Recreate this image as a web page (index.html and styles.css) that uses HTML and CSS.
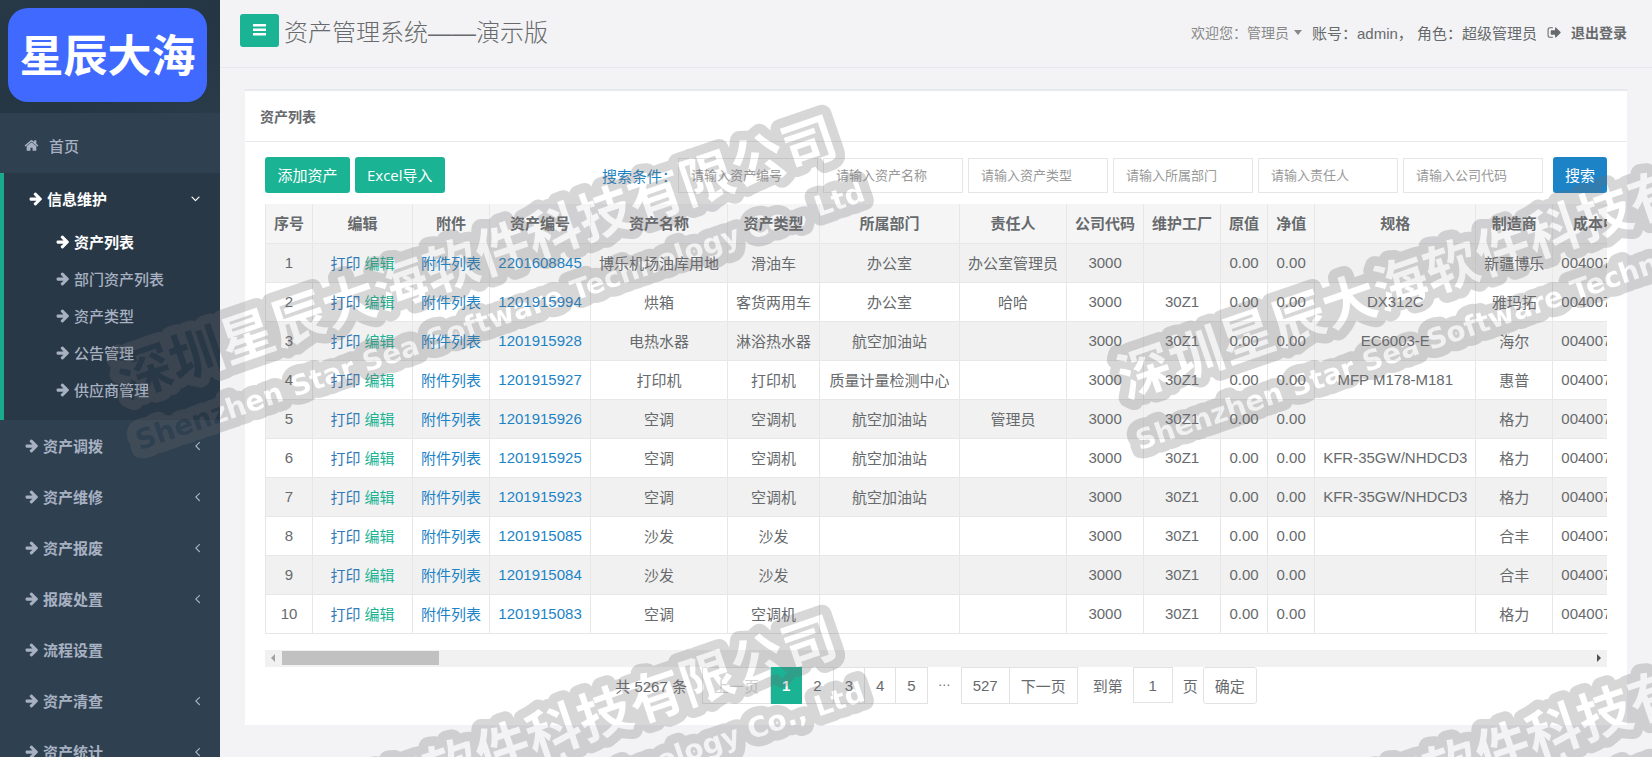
FILE: index.html
```html
<!DOCTYPE html>
<html lang="zh-CN">
<head>
    <meta charset="UTF-8">
    <meta name="viewport" content="width=device-width, initial-scale=1.0">
    <title>资产管理系统</title>
    <link rel="stylesheet" href="styles.css">
</head>
<body>
    <!-- 图标 -->
    <svg class="icon-defs" aria-hidden="true">
        <symbol id="i-arrow" viewBox="0 0 1792 1792"><path d="M1664 960q0 53-37 91l-651 651q-39 37-91 37-51 0-90-37l-75-75q-38-38-38-91t38-91l293-293h-704q-52 0-84.500-37.500t-32.500-90.500v-128q0-53 32.500-90.500t84.500-37.500h704l-293-294q-38-36-38-90t38-90l75-75q38-38 90-38 53 0 91 38l651 651q37 35 37 90z"/></symbol>
        <symbol id="i-left" viewBox="0 0 1792 1792"><path d="M1203 544q0 13-10 23l-393 393 393 393q10 10 10 23t-10 23l-50 50q-10 10-23 10t-23-10l-466-466q-10-10-10-23t10-23l466-466q10-10 23-10t23 10l50 50q10 10 10 23z"/></symbol>
        <symbol id="i-down" viewBox="0 0 1792 1792"><path d="M1395 736q0 13-10 23l-466 466q-10 10-23 10t-23-10l-466-466q-10-10-10-23t10-23l50-50q10-10 23-10t23 10l393 393 393-393q10-10 23-10t23 10l50 50q10 10 10 23z"/></symbol>
        <symbol id="i-home" viewBox="0 0 1792 1792"><path d="M1472 992v480q0 26-19 45t-45 19h-384v-384h-256v384h-384q-26 0-45-19t-19-45v-480q0-1 .5-3t.5-3l575-474 575 474q1 2 1 6zm223-69l-62 74q-8 9-21 11h-3q-13 0-21-7l-692-577-692 577q-12 8-24 7-13-2-21-11l-62-74q-8-10-7-23.500t11-21.500l719-599q32-26 76-26t76 26l244 204v-195q0-14 9-23t23-9h192q14 0 23 9t9 23v408l219 182q10 8 11 21.500t-7 23.500z"/></symbol>
        <symbol id="i-out" viewBox="0 0 1792 1792"><path d="M704 1440q0 4 1 20t.5 26.500-3 23.500-10 19.500-20.500 6.500h-320q-119 0-203.500-84.500t-84.500-203.500v-704q0-119 84.500-203.500t203.500-84.500h320q13 0 22.500 9.500t9.500 22.500q0 4 1 20t.5 26.500-3 23.500-10 19.500-20.500 6.500h-320q-66 0-113 47t-47 113v704q0 66 47 113t113 47h312l11.500 1 11.500 3 8 5.500 7 9 2 13.500zm928-544q0 26-19 45l-544 544q-19 19-45 19t-45-19-19-45v-288h-448q-26 0-45-19t-19-45v-384q0-26 19-45t45-19h448v-288q0-26 19-45t45-19 45 19l544 544q19 19 19 45z"/></symbol>
    </svg>

    <div class="wrapper">
        <nav class="sidebar">
            <div class="logo-box"><div class="logo">星辰大海</div></div>
            <ul class="menu">
                <li class="home"><a href="#"><svg class="icon"><use href="#i-home"/></svg><span>首页</span></a></li>
                <li class="open">
                    <a href="#"><svg class="icon"><use href="#i-arrow"/></svg><span>信息维护</span><svg class="icon chev"><use href="#i-down"/></svg></a>
                    <ul class="submenu">
                        <li class="current"><a href="#"><svg class="icon"><use href="#i-arrow"/></svg><span>资产列表</span></a></li>
                        <li><a href="#"><svg class="icon"><use href="#i-arrow"/></svg><span>部门资产列表</span></a></li>
                        <li><a href="#"><svg class="icon"><use href="#i-arrow"/></svg><span>资产类型</span></a></li>
                        <li><a href="#"><svg class="icon"><use href="#i-arrow"/></svg><span>公告管理</span></a></li>
                        <li><a href="#"><svg class="icon"><use href="#i-arrow"/></svg><span>供应商管理</span></a></li>
                    </ul>
                </li>
                <li><a href="#"><svg class="icon"><use href="#i-arrow"/></svg><span>资产调拨</span><svg class="icon chev"><use href="#i-left"/></svg></a></li>
                <li><a href="#"><svg class="icon"><use href="#i-arrow"/></svg><span>资产维修</span><svg class="icon chev"><use href="#i-left"/></svg></a></li>
                <li><a href="#"><svg class="icon"><use href="#i-arrow"/></svg><span>资产报废</span><svg class="icon chev"><use href="#i-left"/></svg></a></li>
                <li><a href="#"><svg class="icon"><use href="#i-arrow"/></svg><span>报废处置</span><svg class="icon chev"><use href="#i-left"/></svg></a></li>
                <li><a href="#"><svg class="icon"><use href="#i-arrow"/></svg><span>流程设置</span></a></li>
                <li><a href="#"><svg class="icon"><use href="#i-arrow"/></svg><span>资产清查</span><svg class="icon chev"><use href="#i-left"/></svg></a></li>
                <li><a href="#"><svg class="icon"><use href="#i-arrow"/></svg><span>资产统计</span><svg class="icon chev"><use href="#i-left"/></svg></a></li>
            </ul>
        </nav>

        <main class="page">
            <header class="topbar">
                <button class="toggle-btn" type="button" aria-label="菜单">
                    <svg width="13" height="13" viewBox="0 0 13 13" fill="#fff"><path d="M0 1h13v2.600H0zM0 5.500h13v2.600H0zM0 10h13v2.600H0z"/></svg>
                </button>
                <h1>资产管理系统——演示版</h1>
                <div class="user">
                    <a class="welcome" href="#">欢迎您：管理员<i class="caret"></i></a>
                    <span class="account">账号：admin， 角色：超级管理员</span>
                    <a class="logout" href="#"><svg class="icon"><use href="#i-out"/></svg>退出登录</a>
                </div>
            </header>

            <section class="panel">
                <h2>资产列表</h2>
                <div class="panel-body">
                    <div class="toolbar">
                        <button class="btn btn-primary" type="button">添加资产</button>
                        <button class="btn btn-primary" type="button">Excel导入</button>
                        <form class="search">
                            <label for="assetNo">搜索条件：</label>
                            <input type="text" id="assetNo" placeholder="请输入资产编号">
                            <input type="text" aria-label="资产名称" placeholder="请输入资产名称">
                            <input type="text" aria-label="资产类型" placeholder="请输入资产类型">
                            <input type="text" aria-label="所属部门" placeholder="请输入所属部门">
                            <input type="text" aria-label="责任人" placeholder="请输入责任人">
                            <input type="text" aria-label="公司代码" placeholder="请输入公司代码">
                            <button class="btn btn-search" type="button">搜索</button>
                        </form>
                    </div>

                    <div class="table-wrap">
                        <table>
                            <thead>
                                <tr><th>序号</th><th class="col-edit">编辑</th><th>附件</th><th class="col-no">资产编号</th><th>资产名称</th><th>资产类型</th><th class="col-dept">所属部门</th><th>责任人</th><th>公司代码</th><th>维护工厂</th><th>原值</th><th>净值</th><th>规格</th><th>制造商</th><th>成本中心</th></tr>
                            </thead>
                            <tbody>
                                <tr><td>1</td><td><a class="print" href="#">打印</a> <a class="edit" href="#">编辑</a></td><td><a href="#">附件列表</a></td><td><a href="#">2201608845</a></td><td>博乐机场油库用地</td><td>滑油车</td><td>办公室</td><td>办公室管理员</td><td>3000</td><td></td><td>0.00</td><td>0.00</td><td></td><td>新疆博乐</td><td>0040070000</td></tr>
                                <tr><td>2</td><td><a class="print" href="#">打印</a> <a class="edit" href="#">编辑</a></td><td><a href="#">附件列表</a></td><td><a href="#">1201915994</a></td><td>烘箱</td><td>客货两用车</td><td>办公室</td><td>哈哈</td><td>3000</td><td>30Z1</td><td>0.00</td><td>0.00</td><td>DX312C</td><td>雅玛拓</td><td>0040070000</td></tr>
                                <tr><td>3</td><td><a class="print" href="#">打印</a> <a class="edit" href="#">编辑</a></td><td><a href="#">附件列表</a></td><td><a href="#">1201915928</a></td><td>电热水器</td><td>淋浴热水器</td><td>航空加油站</td><td></td><td>3000</td><td>30Z1</td><td>0.00</td><td>0.00</td><td>EC6003-E</td><td>海尔</td><td>0040070000</td></tr>
                                <tr><td>4</td><td><a class="print" href="#">打印</a> <a class="edit" href="#">编辑</a></td><td><a href="#">附件列表</a></td><td><a href="#">1201915927</a></td><td>打印机</td><td>打印机</td><td>质量计量检测中心</td><td></td><td>3000</td><td>30Z1</td><td>0.00</td><td>0.00</td><td>MFP M178-M181</td><td>惠普</td><td>0040070000</td></tr>
                                <tr><td>5</td><td><a class="print" href="#">打印</a> <a class="edit" href="#">编辑</a></td><td><a href="#">附件列表</a></td><td><a href="#">1201915926</a></td><td>空调</td><td>空调机</td><td>航空加油站</td><td>管理员</td><td>3000</td><td>30Z1</td><td>0.00</td><td>0.00</td><td></td><td>格力</td><td>0040070000</td></tr>
                                <tr><td>6</td><td><a class="print" href="#">打印</a> <a class="edit" href="#">编辑</a></td><td><a href="#">附件列表</a></td><td><a href="#">1201915925</a></td><td>空调</td><td>空调机</td><td>航空加油站</td><td></td><td>3000</td><td>30Z1</td><td>0.00</td><td>0.00</td><td>KFR-35GW/NHDCD3</td><td>格力</td><td>0040070000</td></tr>
                                <tr><td>7</td><td><a class="print" href="#">打印</a> <a class="edit" href="#">编辑</a></td><td><a href="#">附件列表</a></td><td><a href="#">1201915923</a></td><td>空调</td><td>空调机</td><td>航空加油站</td><td></td><td>3000</td><td>30Z1</td><td>0.00</td><td>0.00</td><td>KFR-35GW/NHDCD3</td><td>格力</td><td>0040070000</td></tr>
                                <tr><td>8</td><td><a class="print" href="#">打印</a> <a class="edit" href="#">编辑</a></td><td><a href="#">附件列表</a></td><td><a href="#">1201915085</a></td><td>沙发</td><td>沙发</td><td></td><td></td><td>3000</td><td>30Z1</td><td>0.00</td><td>0.00</td><td></td><td>合丰</td><td>0040070000</td></tr>
                                <tr><td>9</td><td><a class="print" href="#">打印</a> <a class="edit" href="#">编辑</a></td><td><a href="#">附件列表</a></td><td><a href="#">1201915084</a></td><td>沙发</td><td>沙发</td><td></td><td></td><td>3000</td><td>30Z1</td><td>0.00</td><td>0.00</td><td></td><td>合丰</td><td>0040070000</td></tr>
                                <tr><td>10</td><td><a class="print" href="#">打印</a> <a class="edit" href="#">编辑</a></td><td><a href="#">附件列表</a></td><td><a href="#">1201915083</a></td><td>空调</td><td>空调机</td><td></td><td></td><td>3000</td><td>30Z1</td><td>0.00</td><td>0.00</td><td></td><td>格力</td><td>0040070000</td></tr>
                            </tbody>
                        </table>
                    </div>
                    <div class="scrollbar">
                        <i class="scroll-left"></i>
                        <div class="track"><div class="thumb"></div></div>
                        <i class="scroll-right"></i>
                    </div>

                    <div class="pager">
                        <span class="total">共 5267 条</span>
                        <div class="pages">
                            <button type="button" disabled>上一页</button>
                            <button type="button" class="active">1</button>
                            <button type="button">2</button>
                            <button type="button">3</button>
                            <button type="button">4</button>
                            <button type="button">5</button>
                        </div>
                        <span class="dots">…</span>
                        <div class="pages">
                            <button type="button">527</button>
                            <button type="button">下一页</button>
                        </div>
                        <label class="goto">到第 <input type="text" value="1"> 页</label>
                        <button class="confirm" type="button">确定</button>
                    </div>
                </div>
            </section>
        </main>
    </div>

    <!-- 水印 -->
    <svg class="watermark" aria-hidden="true">
        <defs>
            <mask id="hollow" maskUnits="userSpaceOnUse" x="-60" y="-100" width="900" height="200">
                <g fill="#fff" stroke="#fff" stroke-width="19" stroke-linejoin="round">
                    <text class="wm-cn" x="0" y="0">深圳星辰大海软件科技有限公司</text>
                    <text class="wm-en" x="-4" y="53">Shenzhen Star Sea Software Technology Co., Ltd</text>
                </g>
                <g fill="#000">
                    <text class="wm-cn" x="0" y="0">深圳星辰大海软件科技有限公司</text>
                    <text class="wm-en" x="-4" y="53">Shenzhen Star Sea Software Technology Co., Ltd</text>
                </g>
            </mask>
            <pattern id="mark" patternUnits="userSpaceOnUse" width="1000" height="500">
                <g transform="translate(126 399) rotate(-19)">
                    <rect x="-60" y="-100" width="900" height="200" fill="#6f6b6f" fill-opacity=".27" mask="url(#hollow)"/>
                </g>
            </pattern>
        </defs>
        <rect width="100%" height="100%" fill="url(#mark)"/>
    </svg>
</body>
</html>
```
FILE: styles.css
```css
* {
    margin: 0;
    padding: 0;
    box-sizing: border-box;
}

body {
    font-family: "Liberation Sans", "Noto Sans CJK SC", sans-serif;
    font-size: 15px;
    color: #676a6c;
    background: #f3f3f5;
}

a {
    color: #1c84c6;
    text-decoration: none;
}

ul {
    list-style: none;
}

button, input {
    font-family: inherit;
    font-size: inherit;
    color: inherit;
}

.icon-defs {
    display: none;
}

.icon {
    width: 15px;
    height: 15px;
    flex: none;
    fill: currentColor;
}

.wrapper {
    display: flex;
    height: 100vh;
    overflow: hidden;
}

/* 侧边栏 */
.sidebar {
    flex: none;
    width: 220px;
    background: #2f4050;
}

.logo-box {
    padding: 8px 13px 11px 8px;
    background: linear-gradient(150deg, #273946 0%, #243644 60%, #2a3b49 100%);
}

.logo {
    height: 94px;
    border-radius: 20px;
    background: #406aff;
    color: #fff;
    font-size: 44px;
    font-weight: 700;
    line-height: 98px;
    text-align: center;
}

.menu a {
    display: flex;
    align-items: center;
    gap: 4px;
    height: 51px;
    padding: 0 15px 0 24px;
    color: #a7b1c2;
    font-weight: 700;
}

.menu .chev {
    margin-left: auto;
}

.menu .home a {
    gap: 10px;
    height: 60px;
    padding-top: 4px;
    font-weight: 500;
}

.menu .open {
    padding-bottom: 12px;
    border-left: 4px solid #19aa8d;
    background: #293846;
}

.menu .open > a {
    height: 50px;
}

.menu .open > a, .menu .current a {
    color: #fff;
}

.menu .open .chev {
    margin-right: 2px;
}

.menu .submenu a {
    height: 37px;
    padding-left: 51px;
    font-weight: 500;
}

.menu .submenu .current a {
    font-weight: 700;
}

/* 顶部 */
.page {
    flex: 1;
    min-width: 0;
}

.topbar {
    display: flex;
    align-items: center;
    height: 68px;
    padding: 0 25px 6px 20px;
    border-bottom: 1px solid #e7eaec;
}

.toggle-btn {
    width: 39px;
    height: 33px;
    border: 0;
    border-radius: 3px;
    background: #1ab394;
}

.topbar h1 {
    margin-left: 5px;
    font-size: 24px;
    font-weight: 300;
}

.user {
    display: flex;
    align-items: center;
    gap: 10px;
    margin-left: auto;
    padding-top: 3px;
}

.welcome {
    display: flex;
    align-items: center;
    gap: 5px;
    color: #888;
    font-size: 14px;
}

.caret {
    border: 4px solid transparent;
    border-top: 5px solid #888;
    border-bottom: 0;
}

.logout {
    display: flex;
    align-items: center;
    gap: 9px;
    color: #676a6c;
    font-size: 14px;
    font-weight: 700;
}

/* 列表面板 */
.panel {
    margin: 21px 25px 0;
    border-top: 2px solid #e7eaec;
    background: #fff;
}

.panel h2 {
    padding: 2px 15px 0;
    border-bottom: 1px solid #e7eaec;
    font-size: 14px;
    line-height: 48px;
}

.panel-body {
    padding: 15px 20px 21px;
}

.toolbar {
    display: flex;
    gap: 5px;
    margin-bottom: 11px;
}

.btn {
    height: 36px;
    padding: 0 12px 1px;
    border: 0;
    border-radius: 3px;
    color: #fff;
    font-family: "Open Sans", "Noto Sans CJK SC", sans-serif;
}

.btn-primary {
    min-width: 85px;
    background: #1ab394;
}

.btn-search {
    margin-left: 5px;
    background: #1c84c6;
}

.search {
    display: flex;
    align-items: center;
    gap: 5px;
    margin-left: auto;
}

.search label {
    color: #1c84c6;
}

.search input {
    width: 140px;
    height: 35px;
    padding: 0 12px;
    border: 1px solid #e5e6e7;
    font-size: 13px;
}

.search #assetNo {
    margin-left: -4px;
}

.search input::placeholder {
    color: #999;
}

.table-wrap {
    overflow: hidden;
}

table {
    border-collapse: collapse;
    white-space: nowrap;
}

th, td {
    height: 39px;
    padding: 0 8px 1px;
    border: 1px solid #e7e7e7;
    text-align: center;
}

th {
    border-top: 0;
    background: #f5f5f6;
}

.col-edit {
    min-width: 100px;
}

.col-no {
    min-width: 101px;
}

.col-dept {
    min-width: 140px;
}

tbody tr:nth-child(odd) {
    background: #f1f1f1;
}

.print {
    color: #337ab7;
}

.edit {
    color: #1ab394;
}

.scrollbar {
    display: flex;
    align-items: center;
    height: 17px;
    margin-top: 16px;
    padding: 0 6px;
    background: #f1f1f1;
}

.scroll-left, .scroll-right {
    border: 4px solid transparent;
}

.scroll-left {
    border-left: 0;
    border-right-color: #a3a3a3;
}

.scroll-right {
    border-right: 0;
    border-left-color: #505050;
}

.track {
    flex: 1;
    margin: 0 7px;
}

.thumb {
    width: 12%;
    height: 14px;
    background: #c1c1c1;
}

/* 分页 */
.pager {
    display: flex;
    justify-content: center;
    align-items: center;
    height: 37px;
}

.pages {
    display: flex;
}

.pages button, .confirm {
    height: 37px;
    padding: 0 11px;
    border: 1px solid #e2e2e2;
    background: #fff;
}

.pages button + button {
    border-left: 0;
}

.pages button:disabled {
    color: #d2d2d2;
}

.pages .active {
    border-color: #1ab394;
    background: #1ab394;
    color: #fff;
    font-weight: 700;
}

.total {
    margin-right: 15px;
}

.dots {
    padding: 0 10px 8px;
    font-size: 13px;
}

.goto {
    display: flex;
    align-items: center;
    gap: 10px;
    margin: 0 5px 0 15px;
}

.goto input {
    width: 40px;
    height: 36px;
    border: 1px solid #e2e2e2;
    text-align: center;
}

.confirm {
    border-radius: 3px;
}

/* 水印 */
.watermark {
    position: fixed;
    top: 0;
    left: 0;
    width: 100%;
    height: 100%;
    pointer-events: none;
}

.wm-cn {
    font-family: "Noto Sans CJK SC", sans-serif;
    font-size: 54px;
    font-weight: 700;
}

.wm-en {
    font-family: "DejaVu Sans", sans-serif;
    font-size: 28px;
    font-weight: 700;
}
```
